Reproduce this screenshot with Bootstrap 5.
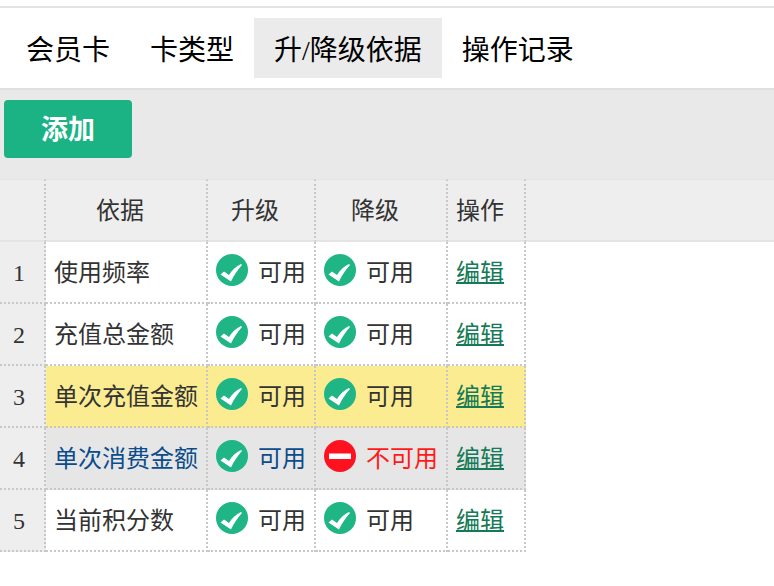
<!DOCTYPE html>
<html lang="zh-CN">
<head>
<meta charset="utf-8">
<title>升/降级依据</title>
<link href="https://cdn.jsdelivr.net/npm/bootstrap@5.3.0/dist/css/bootstrap.min.css" rel="stylesheet">
<style>
body{background:#fff;font-family:"Liberation Serif","Noto Sans CJK SC",serif;color:#333;overflow:hidden}
.top-strip{height:8px;border-bottom:2px solid #e3e3e3}
.tabs-bar{height:82px;padding:10px 0 0 6px;border-bottom:2px solid #e0e0e0}
.tabs-bar .nav-link{height:60px;line-height:65px;padding:0 20px;font-size:28px;color:#000;border-radius:0}
.tabs-bar .nav-link.active{background:#ebebeb;color:#000}
.tool-bar{height:89px;background:#e9e9e9;padding:10px 4px 0}
.add-btn{width:128px;height:58px;padding:0;background:#1bb284;border:0;border-radius:4px;color:#fff;font-size:27px;font-weight:700;line-height:60px}
.add-btn:hover{background:#1bb284;color:#fff}
.data-grid{table-layout:fixed;width:774px;border-collapse:separate;border-spacing:0;font-size:24px;margin:0}
.data-grid th,.data-grid td{height:62px;padding:2px 0 0;vertical-align:middle;border-right:2px dotted #c8c8c8;border-bottom:2px dotted #c8c8c8;font-weight:400}
.data-grid thead th{height:63px;background:#eee;text-align:center;padding-right:12px;border-top:1px solid #e4e4e4;border-bottom:2px solid #e4e4e4;color:#333}
.data-grid thead th:last-child{border-right:0}
.data-grid tbody td:last-child{border:0}
.data-grid .row-no{background:#eee;text-align:center;padding-right:6px}
.name-cell{padding-left:8px!important;white-space:nowrap}
.state{display:flex;align-items:center;padding-left:8px;white-space:nowrap}
.state svg{width:32px;height:32px;flex:none;margin:-7px 10px 0 0}
.row-sel td:not(:last-child):not(.row-no){background:#fbec92}
.row-hover td:not(:last-child):not(.row-no){background:#e6e6e6}
.row-hover .name-cell,.row-hover .ok-text{color:#0b4c8c}
.no-text{color:#ff1a1a}
.edit-link{display:block;padding-left:8px;color:#157a57;text-decoration:underline;text-decoration-thickness:2px}
</style>
</head>
<body>
<div class="top-strip"></div>
<ul class="nav tabs-bar">
<li class="nav-item"><a class="nav-link" href="#">会员卡</a></li>
<li class="nav-item"><a class="nav-link" href="#">卡类型</a></li>
<li class="nav-item"><a class="nav-link active" href="#">升/降级依据</a></li>
<li class="nav-item"><a class="nav-link" href="#">操作记录</a></li>
</ul>
<div class="tool-bar"><button type="button" class="btn add-btn">添加</button></div>
<svg width="0" height="0" class="d-block">
<symbol id="ok" viewBox="0 0 32 32"><circle cx="16" cy="16" r="16" fill="#1fb585"/><path d="M4.500 20.500L8 17.500l5 3.500C16 16 20 12.500 25 10l1 1C22 15.500 18 21 15 27.500z" fill="#fff"/></symbol>
<symbol id="no" viewBox="0 0 32 32"><circle cx="16" cy="16" r="16" fill="#ff1220"/><rect x="5" y="13.500" width="22" height="5.500" fill="#fff"/></symbol>
</svg>
<table class="data-grid">
<colgroup><col style="width:46px"><col style="width:162px"><col style="width:108px"><col style="width:132px"><col style="width:78px"><col></colgroup>
<thead><tr><th></th><th>依据</th><th>升级</th><th>降级</th><th>操作</th><th></th></tr></thead>
<tbody>
<tr><td class="row-no">1</td><td class="name-cell">使用频率</td><td><div class="state"><svg><use href="#ok"/></svg><span class="ok-text">可用</span></div></td><td><div class="state"><svg><use href="#ok"/></svg><span class="ok-text">可用</span></div></td><td><a class="edit-link" href="#">编辑</a></td><td></td></tr>
<tr><td class="row-no">2</td><td class="name-cell">充值总金额</td><td><div class="state"><svg><use href="#ok"/></svg><span class="ok-text">可用</span></div></td><td><div class="state"><svg><use href="#ok"/></svg><span class="ok-text">可用</span></div></td><td><a class="edit-link" href="#">编辑</a></td><td></td></tr>
<tr class="row-sel"><td class="row-no">3</td><td class="name-cell">单次充值金额</td><td><div class="state"><svg><use href="#ok"/></svg><span class="ok-text">可用</span></div></td><td><div class="state"><svg><use href="#ok"/></svg><span class="ok-text">可用</span></div></td><td><a class="edit-link" href="#">编辑</a></td><td></td></tr>
<tr class="row-hover"><td class="row-no">4</td><td class="name-cell">单次消费金额</td><td><div class="state"><svg><use href="#ok"/></svg><span class="ok-text">可用</span></div></td><td><div class="state"><svg><use href="#no"/></svg><span class="no-text">不可用</span></div></td><td><a class="edit-link" href="#">编辑</a></td><td></td></tr>
<tr><td class="row-no">5</td><td class="name-cell">当前积分数</td><td><div class="state"><svg><use href="#ok"/></svg><span class="ok-text">可用</span></div></td><td><div class="state"><svg><use href="#ok"/></svg><span class="ok-text">可用</span></div></td><td><a class="edit-link" href="#">编辑</a></td><td></td></tr>
</tbody>
</table>
<script src="https://cdn.jsdelivr.net/npm/bootstrap@5.3.0/dist/js/bootstrap.bundle.min.js"></script>
</body>
</html>
